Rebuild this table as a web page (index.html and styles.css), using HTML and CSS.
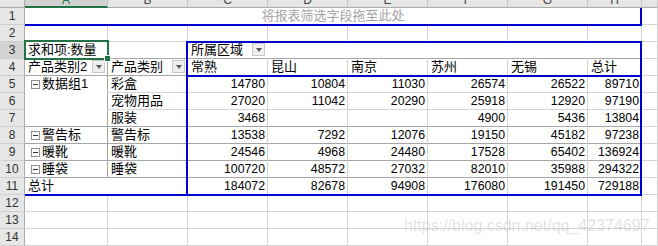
FILE: index.html
```html
<!DOCTYPE html>
<html lang="zh-CN">
<head>
<meta charset="utf-8">
<title>数据透视表</title>
<link rel="stylesheet" href="styles.css">
</head>
<body>
<div class="wrap">
<div class="sheet grid">
  <!-- column headers -->
  <div class="ch corner"></div>
  <div class="ch sel">A</div>
  <div class="ch">B</div>
  <div class="ch">C</div>
  <div class="ch">D</div>
  <div class="ch">E</div>
  <div class="ch">F</div>
  <div class="ch">G</div>
  <div class="ch">H</div>
  <div class="ch"></div>

  <!-- row 1 -->
  <div class="rh">1</div>
  <div class="c hint">将报表筛选字段拖至此处</div>
  <div class="c"></div>

  <!-- row 2 -->
  <div class="rh">2</div>
  <div class="c"></div><div class="c"></div><div class="c"></div><div class="c"></div><div class="c"></div><div class="c"></div><div class="c"></div><div class="c"></div><div class="c"></div>

  <!-- row 3 -->
  <div class="rh rsel">3</div>
  <div class="c dk-b">求和项:数量</div>
  <div class="c dk-b"></div>
  <div class="c dk-b nr split">所属区域<span class="dd"></span></div>
  <div class="c dk-b nr"></div><div class="c dk-b nr"></div><div class="c dk-b nr"></div><div class="c dk-b nr"></div><div class="c dk-b"></div>
  <div class="c"></div>

  <!-- row 4 -->
  <div class="rh">4</div>
  <div class="c dk-b dk-r split">产品类别2<span class="dd"></span></div>
  <div class="c dk-b split">产品类别<span class="dd"></span></div>
  <div class="c">常熟</div><div class="c">昆山</div><div class="c">南京</div><div class="c">苏州</div><div class="c">无锡</div><div class="c">总计</div>
  <div class="c"></div>

  <!-- row 5 -->
  <div class="rh">5</div>
  <div class="c dk-r nb"><span class="tog"></span>数据组1</div>
  <div class="c">彩盒</div>
  <div class="c n">14780</div><div class="c n">10804</div><div class="c n">11030</div><div class="c n">26574</div><div class="c n">26522</div><div class="c n">89710</div>
  <div class="c"></div>

  <!-- row 6 -->
  <div class="rh">6</div>
  <div class="c dk-r nb"></div>
  <div class="c">宠物用品</div>
  <div class="c n">27020</div><div class="c n">11042</div><div class="c n">20290</div><div class="c n">25918</div><div class="c n">12920</div><div class="c n">97190</div>
  <div class="c"></div>

  <!-- row 7 -->
  <div class="rh">7</div>
  <div class="c dk-r dk-b"></div>
  <div class="c dk-b">服装</div>
  <div class="c n dk-b">3468</div><div class="c n dk-b"></div><div class="c n dk-b"></div><div class="c n dk-b">4900</div><div class="c n dk-b">5436</div><div class="c n dk-b">13804</div>
  <div class="c"></div>

  <!-- row 8 -->
  <div class="rh">8</div>
  <div class="c dk-r dk-b"><span class="tog"></span>警告标</div>
  <div class="c dk-b">警告标</div>
  <div class="c n dk-b">13538</div><div class="c n dk-b">7292</div><div class="c n dk-b">12076</div><div class="c n dk-b">19150</div><div class="c n dk-b">45182</div><div class="c n dk-b">97238</div>
  <div class="c"></div>

  <!-- row 9 -->
  <div class="rh">9</div>
  <div class="c dk-r dk-b"><span class="tog"></span>暖靴</div>
  <div class="c dk-b">暖靴</div>
  <div class="c n dk-b">24546</div><div class="c n dk-b">4968</div><div class="c n dk-b">24480</div><div class="c n dk-b">17528</div><div class="c n dk-b">65402</div><div class="c n dk-b">136924</div>
  <div class="c"></div>

  <!-- row 10 -->
  <div class="rh">10</div>
  <div class="c dk-r dk-b"><span class="tog"></span>睡袋</div>
  <div class="c dk-b">睡袋</div>
  <div class="c n dk-b">100720</div><div class="c n dk-b">48572</div><div class="c n dk-b">27032</div><div class="c n dk-b">82010</div><div class="c n dk-b">35988</div><div class="c n dk-b">294322</div>
  <div class="c"></div>

  <!-- row 11 -->
  <div class="rh">11</div>
  <div class="c nr">总计</div>
  <div class="c"></div>
  <div class="c n">184072</div><div class="c n">82678</div><div class="c n">94908</div><div class="c n">176080</div><div class="c n">191450</div><div class="c n">729188</div>
  <div class="c"></div>

  <!-- rows 12-14 -->
  <div class="rh">12</div>
  <div class="c"></div><div class="c"></div><div class="c"></div><div class="c"></div><div class="c"></div><div class="c"></div><div class="c"></div><div class="c"></div><div class="c"></div>
  <div class="rh">13</div>
  <div class="c"></div><div class="c"></div><div class="c"></div><div class="c"></div><div class="c"></div><div class="c"></div><div class="c"></div><div class="c"></div><div class="c"></div>
  <div class="rh">14</div>
  <div class="c"></div><div class="c"></div><div class="c"></div><div class="c"></div><div class="c"></div><div class="c"></div><div class="c"></div><div class="c"></div><div class="c"></div>
</div>

<!-- overlay layer: pivot outlines and the cell selection -->
<div class="overlay grid">
  <div class="frame f-filter"></div>
  <div class="frame f-pivot"></div>
  <div class="frame f-colhead"></div>
  <div class="frame f-total"></div>
  <div class="select"><span class="handle"></span></div>
</div>

<div class="wm">https://blog.csdn.net/qq_42374697</div>
</div>
</body>
</html>
```

FILE: styles.css
```css
html, body {
  margin: 0;
  padding: 0;
  background: #ffffff;
}

.wrap {
  position: relative;
  width: 658px;
  height: 246px;
  overflow: hidden;
  display: grid;
}

.grid {
  grid-area: 1 / 1;
  display: grid;
  grid-template-columns: 25px 83px 80px 80px 80px 80px 80px 80px 54px 1fr;
  grid-template-rows: 8px repeat(14, 17px);
}

.sheet {
  font-family: "Liberation Sans", "Noto Sans CJK SC", sans-serif;
  color: #000;
}

.overlay {
  pointer-events: none;
  z-index: 2;
}

/* column header strip */
.ch {
  box-sizing: border-box;
  background: #e6e6e6;
  border-right: 1px solid #c6c6c6;
  border-bottom: 1px solid #ababab;
  display: flex;
  justify-content: center;
  align-items: flex-end;
  overflow: hidden;
  font-size: 12px;
  line-height: 12px;
  padding-bottom: 1px;
  color: #444;
}
.ch.corner {
  border-right-color: #ababab;
}
.ch.sel {
  background: #d2d2d2;
  border-bottom: 2px solid #217346;
  padding-bottom: 0;
  color: #217346;
}

/* row headers */
.rh {
  box-sizing: border-box;
  background: #e6e6e6;
  border-right: 1px solid #ababab;
  border-bottom: 1px solid #d0d0d0;
  display: flex;
  justify-content: center;
  align-items: flex-end;
  font-size: 12px;
  line-height: 15px;
  color: #333;
}
.rh.rsel {
  background: #d2d2d2;
  color: #333;
}

/* cells */
.c {
  box-sizing: border-box;
  min-width: 0;
  border-right: 1px solid #d4d4d4;
  border-bottom: 1px solid #d4d4d4;
  display: flex;
  align-items: flex-end;
  padding: 0 3px 1px 3px;
  font-size: 13px;
  line-height: 15px;
  white-space: nowrap;
  overflow: hidden;
}
.c.n {
  justify-content: flex-end;
  font-family: "Liberation Sans", sans-serif;
  font-size: 12.3px;
  padding-bottom: 0;
  padding-right: 2px;
}
.c.dk-b { border-bottom-color: #a6a6a6; }
.c.dk-r { border-right-color: #a6a6a6; }
.c.nb { border-bottom-color: #ffffff; }
.c.nr { border-right-color: #ffffff; }

.c.split {
  justify-content: space-between;
  padding-right: 2px;
}

.c.hint {
  grid-column: span 8;
  justify-content: center;
  color: #a5a5a5;
}

/* dropdown buttons of the pivot fields */
.dd {
  flex: none;
  box-sizing: border-box;
  width: 13px;
  height: 13px;
  align-self: center;
  border: 1px solid #c8c8c8;
  background: #efefef;
  display: flex;
  align-items: center;
  justify-content: center;
}
.dd::before {
  content: "";
  width: 0;
  height: 0;
  border-left: 3.5px solid transparent;
  border-right: 3.5px solid transparent;
  border-top: 4px solid #595959;
}

/* collapse toggle */
.tog {
  flex: none;
  box-sizing: border-box;
  width: 9px;
  height: 9px;
  margin: 0 2px 2px 3px;
  border: 1px solid #8f8f8f;
  background: #fff linear-gradient(#333, #333) center / 5px 1px no-repeat;
}

/* blue pivot outlines */
.frame {
  box-sizing: border-box;
}
.f-filter {
  grid-row: 2;
  grid-column: 2 / 10;
  border-right: 2px solid #0000cc;
  border-bottom: 2px solid #0000cc;
  margin-bottom: -1px;
}
.f-pivot {
  grid-row: 4 / 13;
  grid-column: 4 / 10;
  border: 2px solid #0000cc;
  margin: -1px 0 -1px -2px;
}
.f-colhead {
  grid-row: 5;
  grid-column: 4 / 10;
  border-bottom: 2px solid #0000cc;
  margin: 0 0 -1px -2px;
}
.f-total {
  grid-row: 12;
  grid-column: 2 / 4;
  border-bottom: 2px solid #0000cc;
  margin-bottom: -1px;
}

/* selected cell A3 */
.select {
  grid-row: 4;
  grid-column: 2;
  position: relative;
  box-sizing: border-box;
  border: 2px solid #217346;
  margin: -2px -1px -1px -1px;
}
.handle {
  position: absolute;
  right: -4px;
  bottom: -4px;
  width: 5px;
  height: 5px;
  background: #217346;
  border: 1px solid #ffffff;
}

/* watermark */
.wm {
  position: absolute;
  left: 404px;
  top: 218px;
  z-index: 4;
  font-family: "Liberation Sans", sans-serif;
  font-size: 16px;
  line-height: 16px;
  color: rgba(150, 150, 150, 0.28);
  white-space: nowrap;
  pointer-events: none;
}
```
